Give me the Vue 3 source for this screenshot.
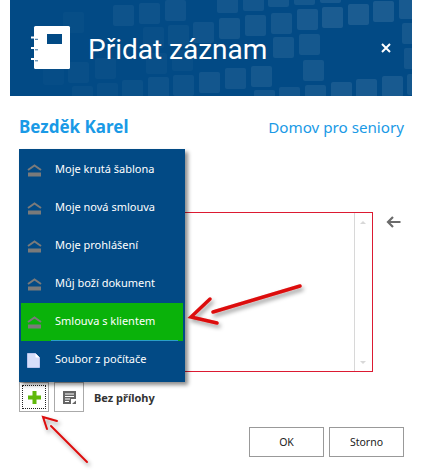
<template>
  <div class="page">

    <!-- HEADER -->
    <header class="header">
      <svg class="header-bg" width="402" height="96" viewBox="0 0 402 96">
        <rect
          v-for="(s, i) in squares"
          :key="i"
          :x="s[0] - 10"
          :y="s[1]"
          width="21"
          height="21"
          rx="2"
          fill="#fff"
          :opacity="s[2]"
        />
      </svg>
      <svg class="book" width="40" height="44" viewBox="0 0 40 44">
        <path d="M3 1.500Q3 0 4.500 0H37.500Q39 0 39 1.500V41.500Q39 43 37.500 43H4.500Q3 43 3 41.500Z" fill="#fff" />
        <rect x="16" y="8" width="15" height="10" fill="#024a85" />
        <path d="M0.500 11.500H6M0.500 22H6M0.500 33H6" stroke="#fff" stroke-width="2" stroke-linecap="round" />
        <path d="M4 13.300H7M4 23.800H7M4 34.800H7" stroke="#024a85" stroke-width="0.800" />
      </svg>
      <h1>Přidat záznam</h1>
      <svg class="close" width="10" height="10" viewBox="0 0 10 10">
        <path d="M1 1L9 9M9 1L1 9" stroke="#fff" stroke-width="2" />
      </svg>
    </header>

    <!-- NAMES -->
    <div class="names">
      <span class="person">Bezděk Karel</span>
      <span class="org">Domov pro seniory</span>
    </div>

    <!-- EDITOR -->
    <div class="editor-row">
      <div class="editor">
        <div class="scrollbar">
          <i class="arr up"></i>
          <i class="arr down"></i>
        </div>
      </div>
      <svg class="back" width="15" height="12" viewBox="0 0 15 12">
        <path d="M14.500 6H2.500M7 1L2 6L7 11" fill="none" stroke="#6b6b6b" stroke-width="2.200" />
      </svg>
    </div>

    <!-- ATTACHMENT -->
    <div class="attach">
      <button class="icon-btn">
        <span class="focus">
          <svg width="13" height="13" viewBox="0 0 13 13">
            <path d="M4.500 0H8.500V4.500H13V8.500H8.500V13H4.500V8.500H0V4.500H4.500Z" fill="#5fb80a" />
          </svg>
        </span>
      </button>
      <button class="icon-btn">
        <svg width="13" height="13" viewBox="0 0 13 13">
          <path d="M0 0H13V8H8V13H0Z" fill="#666" />
          <path d="M2 3H11M2 5.500H11M2 8H7M2 10.500H6" stroke="#fff" stroke-width="1" />
          <path d="M9 13L13 9.500V13Z" fill="#666" />
        </svg>
      </button>
      <span class="attach-label">Bez přílohy</span>
    </div>

    <!-- BUTTONS -->
    <div class="actions">
      <button class="btn">OK</button>
      <button class="btn">Storno</button>
    </div>

    <!-- MENU -->
    <ul class="menu">
      <li
        v-for="item in menu"
        :key="item.label"
        class="menu-item"
        :class="{ active: item.active }"
      >
        <svg v-if="!item.file" class="tpl" width="15" height="13" viewBox="0 0 15 13">
          <path d="M1 6L7.500 1.500L14 6" fill="none" stroke="#7a7a7a" stroke-width="2" />
          <rect x="1" y="8.500" width="13" height="4" fill="#7a7a7a" />
        </svg>
        <svg v-else class="tpl" width="13" height="15" viewBox="0 0 13 15">
          <path d="M0.500 0.500H8.500L12.500 4.500V14.500H0.500Z" fill="#d6defa" stroke="#b9c4ee" />
          <path d="M8.500 0.500V4.500H12.500" fill="#fff" />
        </svg>
        <span>{{ item.label }}</span>
      </li>
    </ul>

    <!-- ANNOTATION ARROWS -->
    <svg class="notes" width="422" height="473" viewBox="0 0 422 473">
      <defs>
        <filter id="sh" x="-20%" y="-20%" width="150%" height="160%">
          <feDropShadow dx="2" dy="3" stdDeviation="2" flood-color="#000" flood-opacity=".4" />
        </filter>
      </defs>
      <g filter="url(#sh)" fill="none" stroke="#dc0a0a" stroke-linecap="round">
        <path d="M300 286L213 312" stroke-width="3.500" />
        <path d="M210 299L191 317L217 323" stroke-width="3.500" />
        <path d="M87 462L51 426" stroke-width="2" />
        <path d="M47 429L43 417L57 421" stroke-width="2" />
      </g>
    </svg>

  </div>
</template>

<script setup>
const squares = [
  [113, 5, 0.05], [139, 3, 0.05], [165, 0, 0.06], [217, -8, 0.07], [243, -10, 0.07],
  [268, -14, 0.08], [294, -16, 0.08], [320, -18, 0.09],
  [63, 12, 0.025], [143, 27, 0.03], [193, 22, 0.06], [219, 18, 0.08], [245, 15, 0.08],
  [271, 13, 0.08], [297, 9, 0.09], [322, 7, 0.1], [348, 4, 0.1], [373, 1, 0.1], [399, -2, 0.09],
  [168, 25, 0.04], [273, 37, 0.08], [299, 34, 0.08], [402, 23, 0.08],
  [43, 64, 0.02], [68, 62, 0.03], [95, 58, 0.03], [146, 53, 0.03], [172, 50, 0.03],
  [173, 75, 0.05], [199, 72, 0.07], [225, 68, 0.07], [251, 66, 0.08], [303, 60, 0.08], [404, 48, 0.07],
  [72, 86, 0.03], [97, 83, 0.03], [122, 80, 0.04], [148, 77, 0.05],
  [254, 90, 0.07], [279, 87, 0.07], [305, 85, 0.08], [331, 82, 0.09], [356, 79, 0.09], [382, 76, 0.09], [407, 74, 0.08],
];

const menu = [
  { label: "Moje krutá šablona" },
  { label: "Moje nová smlouva" },
  { label: "Moje prohlášení" },
  { label: "Můj boží dokument" },
  { label: "Smlouva s klientem", active: true },
  { label: "Soubor z počítače", file: true },
];
</script>

<style>
html,
body {
  background: #fff;
}
</style>

<style scoped>
.page {
  position: relative;

  width: 422px;
  height: 473px;

  overflow: hidden;

  background: #fff;

  font-family: "Noto Sans", "Open Sans", sans-serif;
}

/* HEADER */

.header {
  position: relative;

  height: 96px;

  margin: 0 10px;
  padding: 26px 21px 0 21px;

  box-sizing: border-box;

  display: flex;
  align-items: flex-start;

  overflow: hidden;

  background: #024a85;
}

.header-bg {
  position: absolute;
  left: 0;
  top: 0;
}

.book {
  position: relative;

  flex: none;
}

.header h1 {
  position: relative;

  margin: 2px 0 0 17px;

  flex: 1;

  font-family: "Roboto", sans-serif;
  font-size: 28px;
  font-weight: 400;
  line-height: 44px;

  color: #fff;
}

.close {
  position: relative;

  margin-top: 17px;
}

/* NAMES */

.names {
  display: flex;
  justify-content: space-between;
  align-items: baseline;

  padding: 21px 18px 0 19px;

  color: #1a9ae6;
}

.person {
  font-size: 17px;
  font-weight: 700;
  line-height: 20px;
}

.org {
  font-size: 15.2px;
  line-height: 20px;
}

/* EDITOR */

.editor-row {
  display: flex;
  align-items: flex-start;

  margin-top: 75px;
  padding-left: 19px;
}

.editor {
  width: 354px;
  height: 160px;

  box-sizing: border-box;

  display: flex;
  justify-content: flex-end;

  border: 1px solid #dc1a32;
}

.scrollbar {
  position: relative;

  width: 17px;

  border-left: 1px solid #d8d8d8;
}

.arr {
  position: absolute;
  left: 5px;

  border-left: 3px solid transparent;
  border-right: 3px solid transparent;
}

.arr.up {
  top: 8px;

  border-bottom: 3px solid #d8d8d8;
}

.arr.down {
  bottom: 7px;

  border-top: 3px solid #d8d8d8;
}

.back {
  margin: 4px 0 0 13px;
}

/* ATTACHMENT */

.attach {
  display: flex;
  align-items: center;
  gap: 5px;

  margin-top: 10px;
  padding-left: 19px;
}

.icon-btn {
  width: 30px;
  height: 30px;

  padding: 0;

  box-sizing: border-box;

  display: flex;
  align-items: center;
  justify-content: center;

  border: 1px solid #aaa;

  background: #fff;
}

.focus {
  width: 24px;
  height: 24px;

  box-sizing: border-box;

  display: flex;
  align-items: center;
  justify-content: center;

  border: 1px dotted #222;
}

.attach-label {
  margin-left: 5px;

  font-size: 11px;
  font-weight: 700;

  color: #333;
}

/* BUTTONS */

.actions {
  display: flex;
  justify-content: flex-end;
  gap: 5px;

  margin-top: 15px;
  padding-right: 18px;
}

.btn {
  width: 75px;
  height: 30px;

  padding: 0;

  box-sizing: border-box;

  border: 1px solid #999;

  background: #fff;

  font-family: inherit;
  font-size: 10.5px;

  color: #222;
}

/* MENU */

.menu {
  position: absolute;
  left: 19px;
  top: 149px;

  width: 166px;
  height: 233px;

  margin: 0;
  padding: 2px;

  box-sizing: border-box;

  list-style: none;

  background: #024a85;

  box-shadow: 3px 3px 4px rgba(0, 0, 0, 0.45);
}

.menu-item {
  position: relative;

  height: 38px;

  display: flex;
  align-items: center;

  padding-left: 6px;

  font-size: 11px;

  color: #fff;
}

.menu-item.active {
  background: #0ab20a;
}

.menu-item.active::after {
  content: "";

  position: absolute;
  left: 30px;
  right: 5px;
  bottom: 0;

  height: 1px;

  background: #2a9fc8;
}

.tpl {
  flex: none;
}

.menu-item span {
  position: absolute;
  left: 34px;
  top: 10px;
}

/* ARROWS */

.notes {
  position: absolute;
  left: 0;
  top: 0;

  pointer-events: none;
}
</style>
